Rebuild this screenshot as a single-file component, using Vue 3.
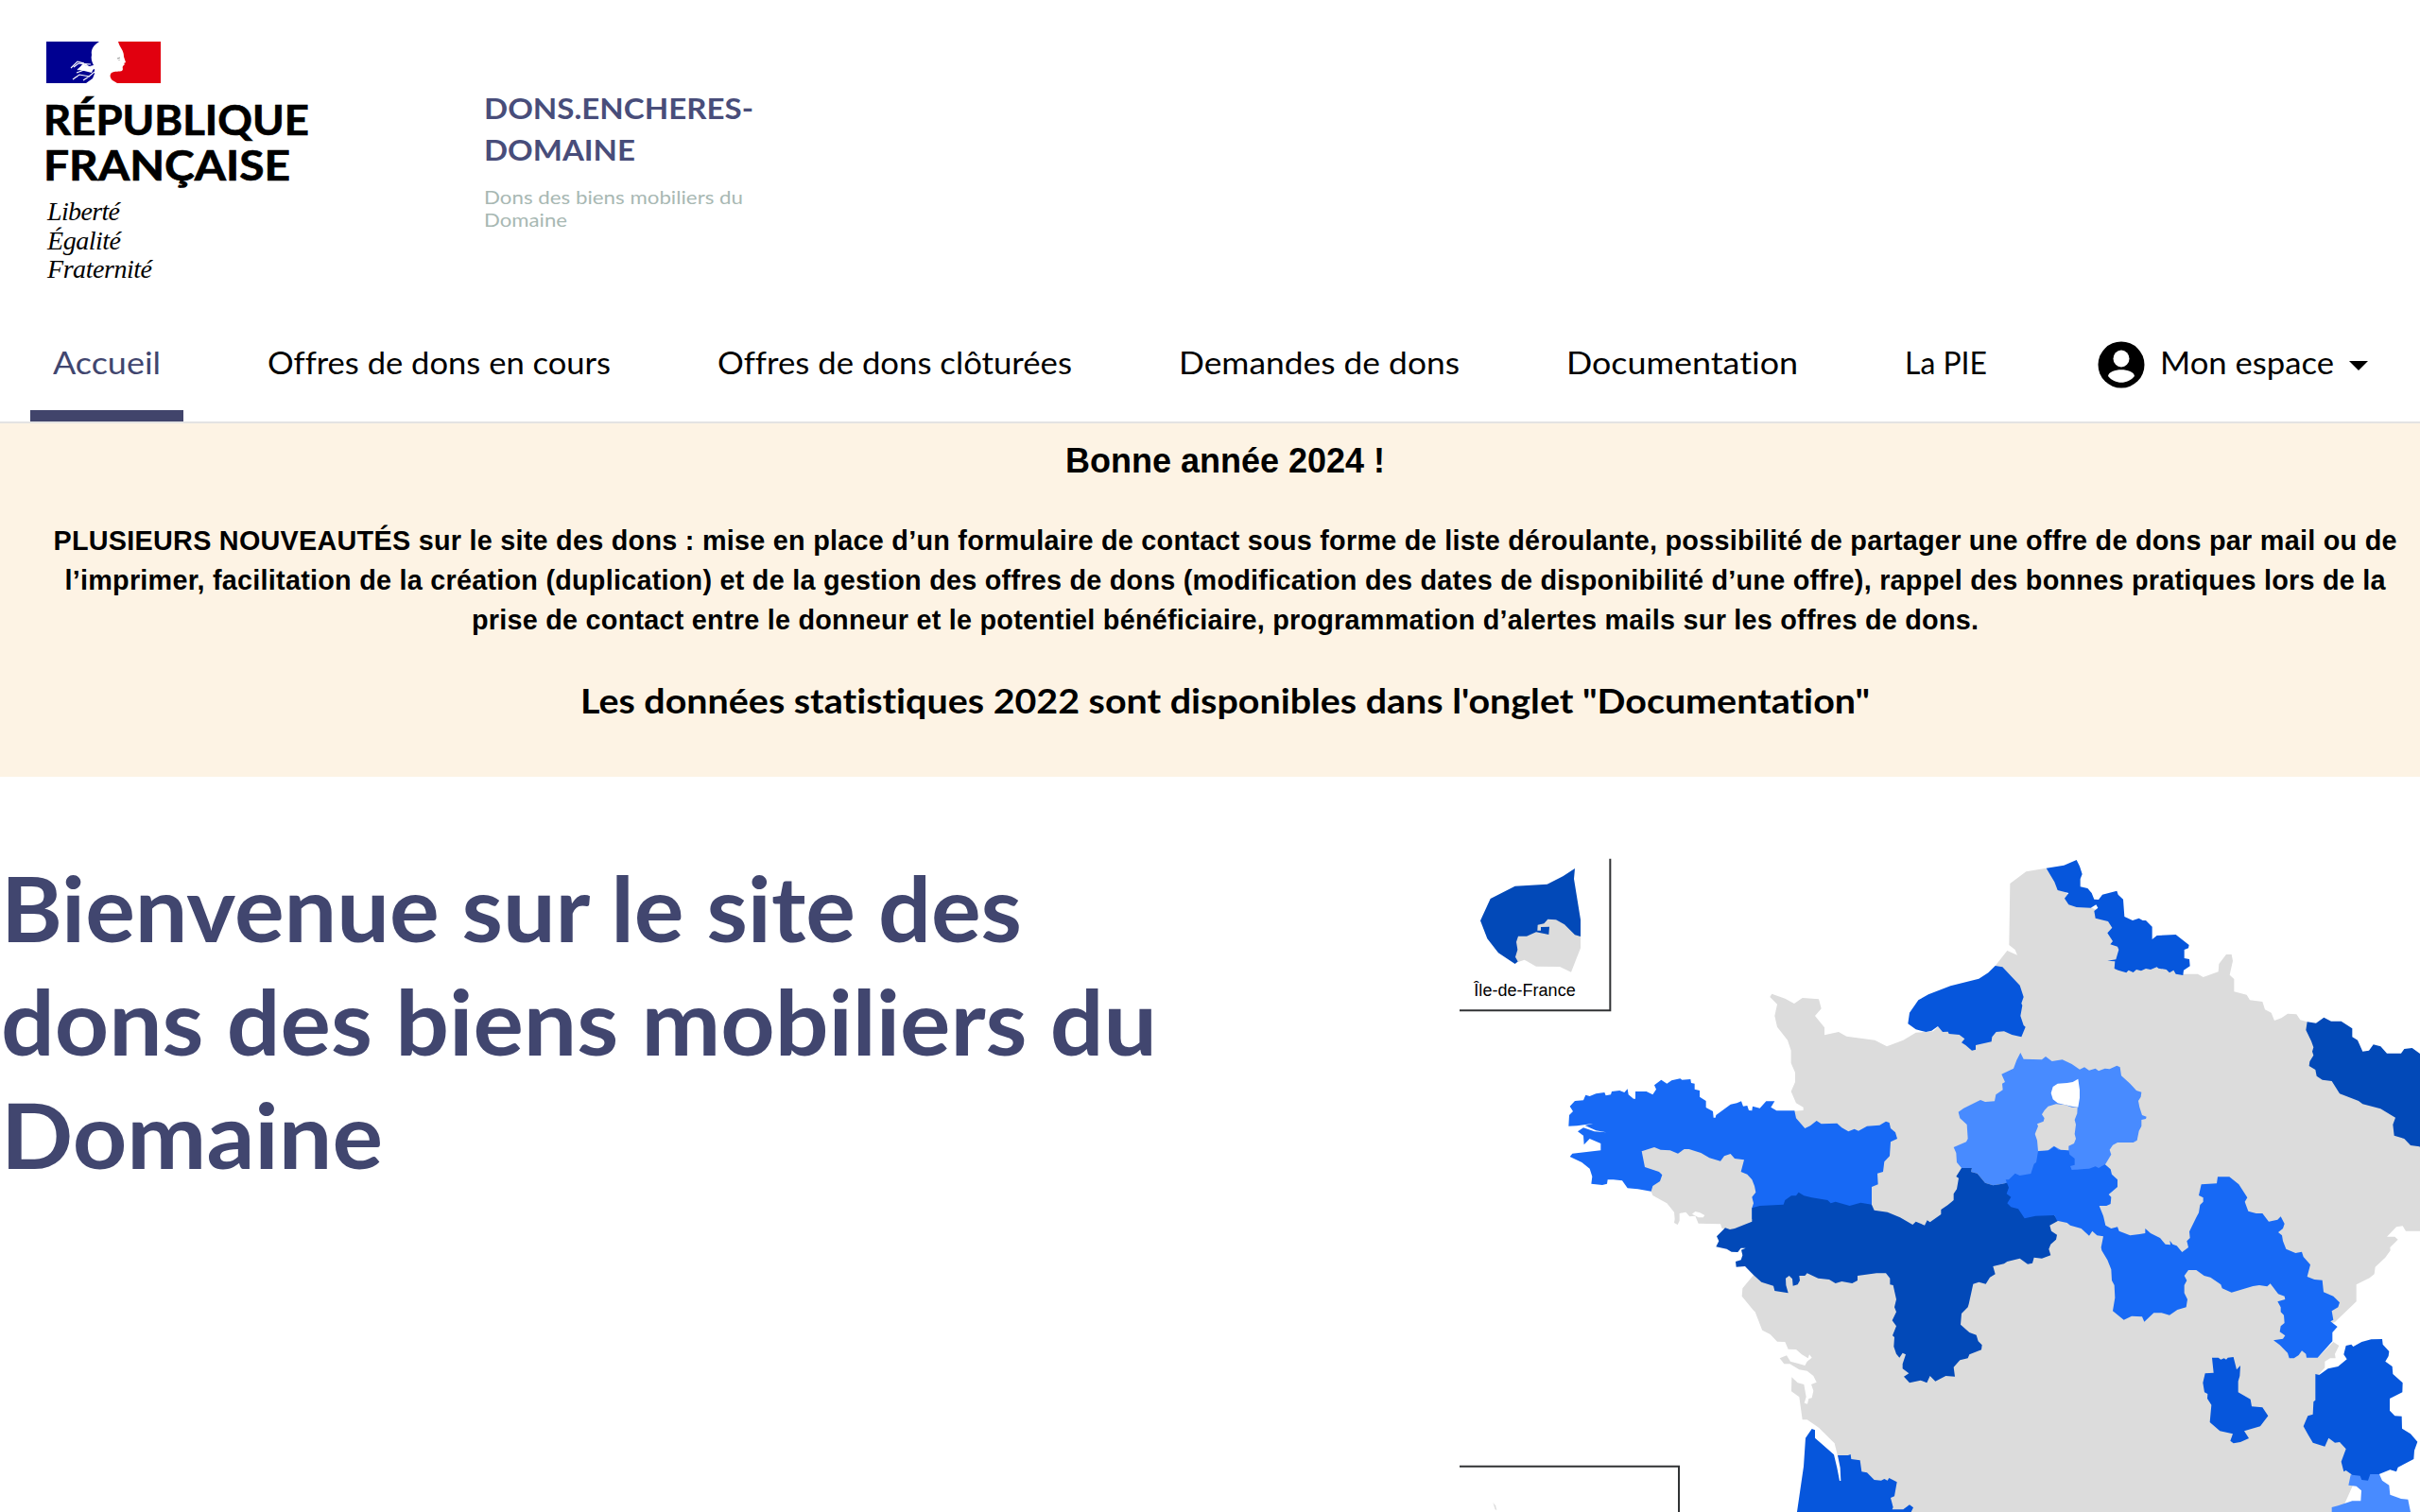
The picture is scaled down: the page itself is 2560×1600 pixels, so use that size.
<script setup>
// Spreads the letters of an element so that it takes the given width.
const vFit = {
  mounted(el, { value }) {
    const natural = el.getBoundingClientRect().width
    const gap = (value - natural) / (el.textContent.trim().length - 1)
    el.style.letterSpacing = `${gap}px`
    el.style.marginRight = `${-gap}px`
  }
}

// Widens the letters themselves to reach the given width.
const vStretch = {
  mounted(el, { value }) {
    const natural = el.getBoundingClientRect().width
    el.style.width = `${value}px`
    el.style.transform = `scaleX(${value / natural})`
  }
}

const nav = [
  { label: 'Accueil', width: 114, active: true },
  { label: 'Offres de dons en cours', width: 363 },
  { label: 'Offres de dons clôturées', width: 375 },
  { label: 'Demandes de dons', width: 297 },
  { label: 'Documentation', width: 245 },
  { label: 'La PIE', width: 87 }
]

// Outlines are noted tile by tile; each tile has its own origin on the map.
const tiles = { A: [0, 0], B: [1530, 0], C: [330, 690], D: [1530, 690], E: [0, 1290], F: [1530, 1290] }
const outline = (source) => {
  let origin = tiles.A
  const points = []
  for (const token of source.trim().split(/\s+/)) {
    if (tiles[token]) origin = tiles[token]
    else {
      const [x, y] = token.split(',').map(Number)
      points.push(`${x + origin[0]},${y + origin[1]}`)
    }
  }
  return points.join(' ')
}

const grey = '#dcdcdc'
const light = '#488bff'
const bright = '#1769f5'
const medium = '#0656dc'
const dark = '#0249b8'

const regions = [
  [grey, `B 374,86 310,97 259,135 256,330 275,345 282,362 250,348 212,396 200,450 0,560
    A 1560,590 1545,604 1490,608 1450,632 1398,652 1360,632 1270,620 1245,606 1200,616 1200,592 1170,555 1190,532 1182,502 1130,498 1104,516 1075,500 1033,485 1027,495 1050,518 1042,555 1050,590 1083,632 1094,665 1094,705 1107,735 1107,765 1094,795 1110,832 1133,845 1133,855 1103,857
    C 800,300 700,500 700,600 645,688 610,730 608,755 645,800 650,805 672,862
    E 1003,263 1028,276 1050,299 1075,300 1085,323 1110,324 1128,340 1148,352 1152,340 1160,350 1145,362 1138,375 1115,368 1092,362 1080,343 1058,352 1072,370 1090,370 1120,388 1145,392 1165,408 1175,428 1158,435 1165,455 1160,478 1150,480 1146,497 1136,494 1142,475 1135,435 1115,430 1096,412 1095,457 1120,475 1130,547 1145,547 1182,572 1232,622 1242,662 1300,740 1340,860
    F 1300,860 1345,760 1400,600 1240,402 1258,382 1258,362 1275,352 1292,352 1290,338 1303,312 1285,300 1235,350 1270,270 1280,240 1290,237 1358,172 1358,118 1400,97 1415,85 1418,62 1450,32 1466,10
    D 1465,600 1490,575 1480,566 1455,566 1485,535 1505,532 1515,548 1600,548 1600,200
    B 1600,800 1250,620 1202,574 1180,568 1168,550 1140,548 1120,562 1098,570 1088,545 1068,535 1060,510 1020,505 1010,488 970,478 970,438 956,425 966,380 962,360 945,360 922,390 920,415 872,432 855,422 810,422 700,380 600,250 450,180`],
  [grey, `C 320,422 325,435 370,460 393,488 395,510 393,522 404,528 410,515 410,492 430,488 442,502 460,500 470,524 540,526 545,540 570,545 640,522 700,500 680,270 280,270 290,400`],
  ['#fff', `C 460,486 475,490 490,498 485,505 470,505 450,494`],
  [bright, `C 58,215 60,180 72,168 62,152 78,135 105,133 112,116 125,120 145,112 172,108 176,118 192,115 195,105 220,102 235,108 245,97 248,115 264,128 270,128 270,105 305,105 325,115 336,98 330,85 352,68 370,80 385,70 412,64 418,68 445,66 447,78 458,80 458,98 474,102 474,122 494,135 494,156 516,168 518,188 524,188 526,180 572,146 592,142 606,136 612,152 625,150 630,165 640,166 642,152 665,158 685,136 712,136 700,155 718,166 775,166 780,190 808,222 825,214 845,198 860,208 910,206 925,220 946,232 965,224 978,230 1005,215 1045,212 1065,200 1076,204 1080,222 1095,235 1101,255 1080,265 1077,310 1060,328 1056,360 1038,365 1040,400 1020,408 1020,500 640,510 640,475 645,460 640,440 652,425 648,405 640,385 625,368 605,360 615,322 585,318 572,303 552,310 540,326 505,316 478,300 440,288 425,288 405,302 380,292 350,290 330,282 290,295 300,345 345,360 355,370 348,390 325,405 320,422 278,415 245,412 228,388 200,385 182,385 180,398 165,402 130,398 133,375 125,350 100,330 62,312 70,302 160,292 160,270 125,255 107,274 105,245 87,232 105,220 140,232 178,235 145,229 110,213 135,207 85,214`],
  [light, `B 95,860 112,848 165,822 180,828 210,826 214,805 236,790 234,770 243,765 232,740 270,722 280,695 292,672 302,692 360,694 372,684 392,699 425,694 455,708 480,725 495,718 510,728 530,722 540,730 560,722 575,724 598,713 608,718 612,745 640,770 660,792 676,797 674,812 666,825 670,845 678,870 692,875 690,882 676,885 676,905 668,920 662,950 650,957 600,957 585,965 575,980 580,995 562,1025 540,1040 340,1050 320,1060 255,1085 205,1093 180,1085 155,1055 135,1050 138,1038 105,1038 90,1020 88,990 80,972 120,955 125,945 122,900 100,880`],
  [dark, `C 640,475 665,468 740,464 745,450 765,436 780,436 788,425 805,436 830,442 880,450 890,460 905,455 950,468 985,458 1020,464 1028,482 1070,488 1110,505 1150,528 1160,518 1188,530 1196,514 1205,520 1240,495 1240,480 1262,465 1280,450 1280,430 1290,415 1296,380 1288,375 1305,348
    D 138,348 135,360 155,365 180,395 205,403 235,398 260,392 330,480 400,498 412,515 385,530 390,548 408,560 405,575 388,590 382,605 388,625 360,635 335,632 330,650 315,653 290,635 250,645 240,652 205,660 212,685 195,695 182,716 160,710 142,716 128,780
    F 125,190 105,210 102,245 130,270 152,278 158,298 170,310 168,325 130,340 125,352 100,358 80,380 84,410 55,408 22,425 5,408
    C 1205,1008 1195,1030 1175,1022 1140,1030 1122,1010 1138,1000 1118,985 1118,970 1128,940 1118,935 1108,950 1098,938 1090,915 1092,885 1086,880 1098,850 1085,832 1098,805 1092,790 1098,765 1088,720 1078,718 1078,698 1065,682 1035,682 975,690 975,705 958,714 925,708 905,714 885,702 850,698 815,682 808,690 790,690 792,705 785,718 770,722 768,700 758,690 747,698 748,720 755,745 712,738 708,722 670,710 645,688 618,660 590,662 588,645 605,640 610,625 606,608 620,602 605,602 595,615 575,614 560,605 526,598 535,580 528,565 555,538 570,543 585,540 640,518`],
  [bright, `D 348,295 385,290 400,280 412,290 445,292 448,305 464,318 464,338 450,342 455,354 480,352 510,350 530,343 540,348 560,336 578,352 582,368 600,385 600,408 572,432 580,440 578,462 565,468 542,468 555,500 562,530 580,540 600,535 605,548 640,562 670,558 688,555 688,540 705,555 735,570 752,590 768,592 766,578 775,590 788,595 805,615 825,600 820,580 830,570 828,550 850,505 858,490 862,465 872,455 872,442 858,435 866,400 915,397 918,376 955,376 985,400 1012,442 1004,455 1015,485 1040,492 1060,492 1080,518 1108,512 1118,502 1130,525 1125,540 1110,552 1122,562 1125,580 1135,605 1165,618 1185,614 1190,630 1212,655 1202,693 1225,702 1250,704 1254,742 1285,755 1305,775
    F 1300,190 1280,202 1285,230 1276,235 1298,252 1282,270 1282,298 1235,350 1200,350 1198,338 1185,328 1175,342 1160,352 1145,352 1140,335 1115,310 1095,295 1125,290 1132,280 1115,268 1118,250 1130,240 1128,215 1118,205 1118,190 1108,172 1132,165 1130,155 1110,148 1085,115 1075,124 1050,120 1030,123 962,143 932,130 928,118 895,95 875,90 850,72 825,72 812,90 820,105 812,120 812,145 822,165 818,190 790,198 765,215 740,208 715,208 685,236 678,220 645,218 620,230 585,202 592,160 590,120 582,105 580,70 568,40 550,10
    D 548,600 555,565 535,562 520,548 510,563 485,540 450,530 440,522 408,515 400,498 340,500 305,508 285,478 262,472 250,460 262,440 248,430 255,410 245,385 255,385 275,365 290,372 325,366 335,335 342,330`],
  ['#fff', `B 475,755 480,790 480,815 475,845 455,842 435,838 410,832 395,820 389,800 395,780 410,770 440,768 458,765`],
  [grey, `B 380,842 405,835 435,838 455,845 473,845 472,865 464,885 468,900 464,930 468,945 462,960 445,968 445,982 420,980 398,968 380,982 348,984 345,950 338,930 348,905 345,898 365,890 368,880 360,868 368,855`],
  [medium, `B 374,86 430,77 470,60 480,80 488,105 482,120 482,145 505,150 518,165 526,185 540,186 552,170 598,158 602,170 618,185 622,240 648,252 668,245 680,252 690,252 710,272 710,312 725,300 785,297 827,330 825,340 812,345 812,372 828,375 830,397 810,410 808,426 785,422 778,410 765,418 755,408 730,404 725,400 705,408 690,405 675,412 660,408 650,417 635,410 628,418 602,410 590,405 592,382 568,380 595,376 604,345 600,335 577,328 585,318 568,292 583,275 570,255 530,245 526,222 538,212 532,202 515,212 470,210 445,202 432,182 445,165 410,156 400,130`],
  [medium, `B -65,580 -60,545 -32,505 0,487 70,460 160,437 190,418 212,396 235,400 290,458 302,495 295,515 298,522 292,555 302,585 308,590 295,622 265,615 240,604 215,606 202,622 200,637 150,648 150,662 138,665 118,648 105,640 115,628 98,615 65,612 62,605 45,606 30,588 10,602 -8,606 -40,598`],
  [dark, `B 1202,574 1230,578 1255,560 1278,572 1310,572 1345,595 1345,622 1362,632 1378,668 1398,665 1412,646 1435,652 1455,674 1500,674 1510,660 1535,657 1560,675 1600,690 1600,990 1558,970 1530,966 1510,945 1478,935 1474,900 1482,878 1435,850 1378,835 1365,825 1305,802 1280,762 1250,758 1232,746 1228,726 1208,714 1210,700 1222,680 1218,668 1222,655 1215,635 1198,600`],
  [medium, `F 900,350 920,350 928,356 938,352 945,356 950,350 968,348 978,388 990,375 988,408 983,425 983,460 1022,482 1026,505 1060,508 1078,535 1053,568 1002,583 1017,606 990,618 968,622 958,614 966,592 925,583 893,555 898,500 885,480 886,465 876,460 871,430 878,400 905,398 902,370`],
  [light, `F 1340,722 1365,710 1430,710 1430,718 1440,740 1462,755 1465,785 1500,798 1522,800 1530,840 1535,860 1280,860 1280,825 1300,820 1345,805 1372,805 1374,772 1358,758 1333,755`],
  [medium, `F 1228,402 1240,405 1268,385 1300,378 1328,355 1318,340 1325,312 1342,308 1348,315 1375,300 1405,292 1440,291 1442,308 1462,330 1460,345 1450,362 1472,378 1474,402 1505,430 1504,460 1464,480 1464,518 1480,535 1502,536 1503,575 1530,592 1552,617 1542,645 1540,672 1490,698 1485,712 1465,706 1430,720 1402,720 1395,740 1375,738 1370,725 1345,722 1325,708 1318,712 1310,680 1325,640 1305,618 1290,620 1270,605 1258,632 1220,620 1205,595 1190,568 1204,535 1220,530 1222,490 1228,485`],
  [medium, `E 1140,605 1160,576 1170,580 1170,605 1230,658 1240,700 1248,741 1252,741 1250,700 1242,660 1275,660 1283,657 1285,672 1313,676 1318,712 1335,715 1358,738 1380,740 1390,735 1400,740 1405,732 1430,745 1422,790 1410,795 1418,825 1415,832 1450,832 1470,817 1482,826 1475,840 1470,860 1110,860 1134,695`],
  [dark, `A 108,253 140,183 218,143 320,137 370,112 408,87 405,120 426,250 426,310 230,350 228,382 218,390 165,355 130,310`],
  [grey, `A 228,302 255,302 285,289 325,297 327,272 300,273 300,284 289,284 290,266 310,262 322,248 348,250 375,265 408,298 426,303 426,340 396,416 360,399 285,398 248,377 228,384 219,368 226,345 222,320`],
  [grey, `E 148,810 156,820 160,834 155,832`]
].map(([fill, source]) => ({ fill, points: outline(source) }))
</script>

<template>
  <div class="page">
    <header>
      <div class="masthead">
        <svg class="logo" viewBox="0 0 400 322" role="img" aria-label="République française">
          <path fill="#000091" d="M49 44h56c-6 4-9 8-8 14-1 4 0 7 2 11l-4 1 2 4 3-1v5l-2 5-7 5H49z" />
          <path fill="#e1000f" d="M125 44h45v44h-46l-5-3c-3-3-3-6-1-8 3-2 9-1 11-2 2-2 0-3 1-5l2-2-1-1 2-1-2-6c0-4-1-6-4-11l-1-2z" />
          <path fill="none" stroke="#fff" stroke-width="1.1" d="M75 72l7-7 7 2M78 71l5-4 13 1M82 74l7-6 10 5M81 77l8-3 9-2M77 84l7-5 11 2M88 85l6-4 6-5M79 82l3-1" />
          <path fill="#fff" d="M83 74l4-6 12 4-2 5-8-2z" />
          <path stroke="#777" stroke-width=".8" fill="none" d="M124 62l3-1M126 63v1" />
          <g class="wordmark">
            <text x="46" y="142.7" textLength="281" lengthAdjust="spacingAndGlyphs">RÉPUBLIQUE</text>
            <text x="46" y="191.3" textLength="261" lengthAdjust="spacingAndGlyphs">FRANÇAISE</text>
          </g>
          <g class="motto">
            <text x="50" y="233" textLength="77">Liberté</text>
            <text x="50" y="264" textLength="78">Égalité</text>
            <text x="50" y="294" textLength="111">Fraternité</text>
          </g>
        </svg>
        <div class="service">
          <p class="service-name"><span v-stretch="285">DONS.ENCHERES-</span><br /><span v-stretch="160">DOMAINE</span></p>
          <p class="service-tagline"><span v-stretch="274">Dons des biens mobiliers du</span><br /><span v-stretch="88">Domaine</span></p>
        </div>
      </div>
      <nav>
        <a v-for="item in nav" :key="item.label" :class="{ active: item.active }"><span v-stretch="item.width">{{ item.label }}</span></a>
        <a class="account">
          <svg class="avatar" viewBox="0 0 50 50">
            <circle cx="25" cy="25" r="24.5" />
            <ellipse cx="25" cy="18.5" rx="8.5" ry="9" fill="#fff" />
            <path fill="#fff" d="M11 37c1-9 27-9 28 0-7 9-21 9-28 0z" />
          </svg>
          <span v-stretch="184">Mon espace</span>
          <i class="caret"></i>
        </a>
      </nav>
    </header>

    <section class="banner">
      <h2><span v-fit="338">Bonne année 2024 !</span></h2>
      <p>
        <span v-fit="2479">PLUSIEURS NOUVEAUTÉS sur le site des dons : mise en place d’un formulaire de contact sous forme de liste déroulante, possibilité de partager une offre de dons par mail ou de</span><br />
        <span v-fit="2455">l’imprimer, facilitation de la création (duplication) et de la gestion des offres de dons (modification des dates de disponibilité d’une offre), rappel des bonnes pratiques lors de la</span><br />
        <span v-fit="1594">prise de contact entre le donneur et le potentiel bénéficiaire, programmation d’alertes mails sur les offres de dons.</span>
      </p>
      <h3><span v-stretch="1364">Les données statistiques 2022 sont disponibles dans l'onglet "Documentation"</span></h3>
    </section>

    <main>
      <h1>
        <span v-stretch="1080">Bienvenue sur le site des</span><br />
        <span v-stretch="1223">dons des biens mobiliers du</span><br />
        <span v-stretch="404">Domaine</span>
      </h1>
      <svg class="map" viewBox="42 0 3048 2130">
        <polygon v-for="(region, i) in regions" :key="i" :points="region.points" :fill="region.fill" />
        <g class="frame">
          <path d="M520 56V538H42" />
          <path d="M42 1985H738V2140" />
        </g>
        <text class="inset-label" x="88" y="492" textLength="322">Île-de-France</text>
      </svg>
    </main>
  </div>
</template>

<style>
body {
  margin: 0;
  background: #fff;
}
</style>

<style scoped>
.page {
  width: 2560px;
  height: 1600px;
  overflow: hidden;
  font-family: Lato, "Open Sans", sans-serif;
  font-variant-ligatures: none;
  color: #000;
}
h1, h2, h3, p {
  margin: 0;
}
span {
  display: inline-block;
  white-space: nowrap;
  text-align: left;
  transform-origin: 0 50%;
}
header {
  height: 446px;
  border-bottom: 2px solid #e3e3e3;
}
.masthead {
  display: flex;
  height: 322px;
}
.logo {
  width: 400px;
  height: 322px;
  margin-right: 112px;
}
.wordmark {
  font-size: 44.5px;
  font-weight: 700;
  stroke: #000;
  stroke-width: 0.7px;
}
.motto {
  font: italic 28px "Liberation Serif", serif;
}
.service {
  padding-top: 92px;
}
.service-name {
  font-size: 31px;
  font-weight: 700;
  line-height: 44px;
  color: #484d7a;
}
.service-tagline {
  margin-top: 16px;
  font-size: 20px;
  line-height: 24px;
  color: #a8b8b3;
}
nav {
  display: flex;
  gap: 65px;
  height: 124px;
  padding: 0 32px;
}
nav a {
  display: flex;
  flex: none;
  align-items: center;
  padding: 0 24px;
  font-size: 32px;
  line-height: 126px;
}
nav a.active {
  color: #41466f;
  box-shadow: inset 0 -12px #41446b;
}
.avatar {
  width: 50px;
  height: 50px;
  margin: 3px 16px 0 4px;
}
.caret {
  margin: 6px 0 0 16px;
  border: 10px solid transparent;
  border-top-color: #000;
  border-bottom: 0;
}
.banner {
  height: 361px;
  padding: 13px 0 0 32px;
  background: #fdf3e4;
  text-align: center;
}
.banner h2 {
  font: 700 36px/54px "Liberation Sans", sans-serif;
}
.banner p {
  margin: 36px 0 37px;
  font: 700 28.8px/42px "Liberation Sans", sans-serif;
}
.banner h3 {
  font-size: 36px;
  font-weight: 700;
  line-height: 54px;
}
main {
  display: flex;
  justify-content: space-between;
  height: 778px;
}
h1 {
  padding: 78px 0 0 1px;
  font-size: 95px;
  line-height: 120px;
  color: #41466f;
}
.map {
  width: 1016px;
  height: 710px;
  margin-top: 68px;
}
.frame path {
  fill: none;
  stroke: #303234;
  stroke-width: 6;
}
.inset-label {
  font: 54px "Liberation Sans", sans-serif;
}
</style>
